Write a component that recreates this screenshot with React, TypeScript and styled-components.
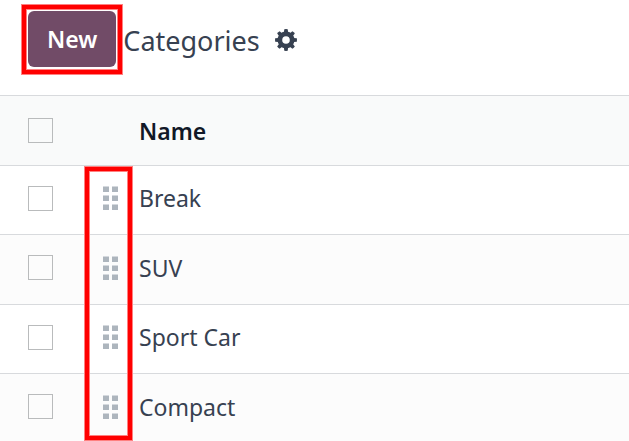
import React from "react";
import styled, { createGlobalStyle, css } from "styled-components";

const GlobalStyle = createGlobalStyle`
  *, *::before, *::after { box-sizing: border-box; }
  body {
    margin: 0;
    overflow: hidden;
    background: #fff;
    color: #374151;
    font-family: "Noto Sans", "Open Sans", sans-serif;
    font-size: 23px;
    line-height: 36px;
  }
`;

const highlight = css`
  border: 4px solid #ff0000;
  box-shadow: 0 0 0 1px #ff8080, inset 0 0 0 1px #ff8080;
`;

const ControlPanel = styled.header`
  display: flex;
  align-items: flex-start;
  padding: 5px 22px 21px;
`;

const ButtonHighlight = styled.div`
  ${highlight}
  padding: 2px 2px 3px;
`;

const PrimaryButton = styled.button`
  display: block;
  height: 56px;
  padding: 0 19px;
  border: 0;
  border-radius: 6px;
  background: #714b67;
  color: #fff;
  font: 600 23px/56px "Noto Sans", "Open Sans", sans-serif;
  cursor: pointer;
`;

const Title = styled.h1`
  margin: 16px 0 0 1px;
  font-size: 27px;
  font-weight: 400;
  line-height: 40px;
`;

const IconButton = styled.button`
  display: flex;
  margin: 24px 0 0 15px;
  padding: 0;
  border: 0;
  background: none;
  color: #374151;
  cursor: pointer;
`;

const ListView = styled.main`
  position: relative;
`;

const Table = styled.table`
  width: 100%;
  border-collapse: separate;
  border-spacing: 0;
  border-top: 1px solid #d8dadd;
`;

const Row = styled.tr`
  height: 69px;
  background: #fff;

  &:nth-child(even) {
    height: 70px;
    background: #fcfcfc;
  }
`;

const HeadRow = styled.tr`
  height: 70px;
  background: #f9fafa;
  color: #111827;
`;

const cell = css`
  padding: 0 0 4px;
  border-bottom: 1px solid #d8dadd;
  text-align: left;
  vertical-align: middle;
`;

const HeadCell = styled.th`
  ${cell}
  padding-bottom: 0;
  font-weight: 600;
`;

const Cell = styled.td`
  ${cell}
`;

const SelectColumn = styled.col`
  width: 84px;
`;

const HandleColumn = styled.col`
  width: 55px;
`;

const Checkbox = styled.input`
  appearance: none;
  display: block;
  width: 25px;
  height: 25px;
  margin: 0 0 0 28px;
  border: 1px solid #b9bbbc;
  background: transparent;

  &:checked {
    background: #714b67;
  }
`;

const Handle = styled.svg`
  display: block;
  margin: 0 0 0 19px;
  cursor: grab;
`;

const HandleHighlight = styled.div`
  ${highlight}
  position: absolute;
  top: 72px;
  bottom: 4px;
  left: 85px;
  width: 47px;
  pointer-events: none;
`;

const categories = ["Break", "SUV", "Sport Car", "Compact"];

function GearIcon() {
  return (
    <svg width="22" height="22" viewBox="0 0 22 22" aria-hidden="true">
      <g fill="currentColor">
        {[0, 45, 90, 135].map((angle) => (
          <path
            key={angle}
            d="M8.9 3.5 9.3 0.2Q11 -0.1 12.7 0.2L13.1 3.5V18.5L12.7 21.8Q11 22.1 9.3 21.8L8.9 18.5Z"
            transform={`rotate(${angle} 11 11)`}
          />
        ))}
      </g>
      <circle cx="11" cy="11" r="6" fill="none" stroke="currentColor" strokeWidth="5" />
      <circle cx="11" cy="11" r="3.8" fill="#fff" />
    </svg>
  );
}

function DragHandle() {
  return (
    <Handle width="15" height="24" viewBox="0 0 15 24" role="img" aria-label="Drag to reorder">
      {[0, 9, 18].map((y) =>
        [0, 9].map((x) => (
          <g key={`${x}-${y}`}>
            <rect x={x} y={y} width="6" height="6" fill="#d5d9de" />
            <rect x={x} y={y + 1} width="6" height="5" fill="#adb5bd" />
          </g>
        ))
      )}
    </Handle>
  );
}

export default function App() {
  return (
    <>
      <GlobalStyle />
      <ControlPanel>
        <ButtonHighlight>
          <PrimaryButton type="button">New</PrimaryButton>
        </ButtonHighlight>
        <Title>Categories</Title>
        <IconButton type="button" aria-label="Settings">
          <GearIcon />
        </IconButton>
      </ControlPanel>
      <ListView>
        <Table>
          <colgroup>
            <SelectColumn />
            <HandleColumn />
            <col />
          </colgroup>
          <thead>
            <HeadRow>
              <HeadCell>
                <Checkbox type="checkbox" aria-label="Select all" />
              </HeadCell>
              <HeadCell />
              <HeadCell scope="col">Name</HeadCell>
            </HeadRow>
          </thead>
          <tbody>
            {categories.map((name) => (
              <Row key={name}>
                <Cell>
                  <Checkbox type="checkbox" aria-label={`Select ${name}`} />
                </Cell>
                <Cell>
                  <DragHandle />
                </Cell>
                <Cell>{name}</Cell>
              </Row>
            ))}
          </tbody>
        </Table>
        <HandleHighlight />
      </ListView>
    </>
  );
}
